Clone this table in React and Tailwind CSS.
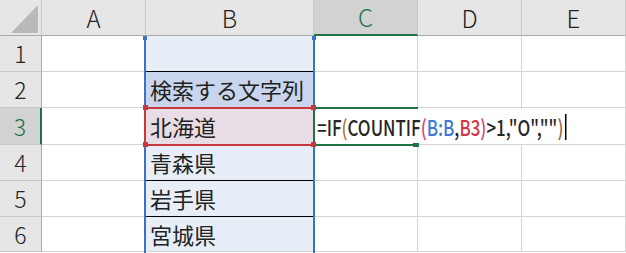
import React from 'react'

const cols = ['A', 'B', 'C', 'D', 'E']
const rowHeights = ['h-[36px]', 'h-[36px]', 'h-[37px]', 'h-[36px]', 'h-[36px]', 'h-[35px]']

const names = ['', '検索する文字列', '北海道', '青森県', '岩手県', '宮城県']

// fill of the B column per row (range highlight)
const bFill = [
    'bg-[#e8eef8]',
    'bg-[#c9d5ec]',
    'bg-[#e8dde5]',
    'bg-[#e8eef8]',
    'bg-[#e8eef8]',
    'bg-[#e8eef8]',
]
const bBorder = [
    'border-b-black',
    'border-b-[#d4d4d4]',
    'border-b-[#d4d4d4]',
    'border-b-black',
    'border-b-black',
    'border-b-[#d4d4d4]',
]

const jp = { fontFamily: '"Noto Sans CJK JP", "Noto Sans", sans-serif' }

const ColHeader = ({ label, active }) => (
    <div
        className={`h-[36px] flex items-center justify-center border-r border-r-[#c8c8c8] text-[24px] font-light ${
            active
                ? 'bg-[#d2d2d2] text-[#217346] border-b-2 border-b-[#217346]'
                : 'bg-[#e6e6e6] text-[#222] border-b border-b-[#a9a9a9]'
        }`}
    >
        {label}
    </div>
)

const Formula = () => (
    <span className="inline-flex items-center origin-left scale-x-[0.77] whitespace-nowrap text-[22px] font-medium text-[#262626]">
        =IF<span className="text-[#b07a3c]">(</span>COUNTIF
        <span className="text-[#cc4a7c]">(</span>
        <span className="text-[#3d78d4]">B:B</span>,
        <span className="text-[#d1353f]">B3</span>
        <span className="text-[#cc4a7c]">)</span>
        &gt;1,"O",""
        <span className="text-[#9c6a48]">)</span>
        <span className="ml-[2px] w-[2px] h-[26px] bg-black" />
    </span>
)

export default function App() {
    return (
        <div className="relative w-[626px] h-[253px] bg-white overflow-hidden" style={jp}>
            <div className="grid grid-cols-[42px_104px_168px_104px_104px_104px]">
                {/* corner */}
                <div className="h-[36px] bg-[#e6e6e6] border-r border-r-[#c8c8c8] border-b border-b-[#a9a9a9] relative">
                    <svg className="absolute left-0 top-0" width="41" height="35" viewBox="0 0 41 35">
                        <polygon points="11,33 38,33 38,5" fill="#b9b9b9" />
                    </svg>
                </div>
                {cols.map((c) => (
                    <ColHeader key={c} label={c} active={c === 'C'} />
                ))}

                {rowHeights.map((h, i) => {
                    const r = i + 1
                    const active = r === 3
                    return (
                        <React.Fragment key={r}>
                            <div
                                className={`${h} flex items-center justify-center border-b border-b-[#c8c8c8] text-[23px] font-light ${
                                    active
                                        ? 'bg-[#d2d2d2] text-[#217346] border-r-2 border-r-[#217346]'
                                        : 'bg-[#e6e6e6] text-[#222] border-r border-r-[#a9a9a9]'
                                }`}
                            >
                                {r}
                            </div>
                            <div className={`${h} border-r border-b border-[#d4d4d4]`} />
                            <div
                                className={`${h} ${bFill[i]} border-r border-r-[#d4d4d4] border-b ${bBorder[i]} flex items-center pl-[4px] text-[22px] text-[#222]`}
                            >
                                {names[i]}
                            </div>
                            <div className={`${h} border-r border-b border-[#d4d4d4]`} />
                            <div className={`${h} border-r border-b border-[#d4d4d4]`} />
                            <div className={`${h} border-r border-b border-[#d4d4d4]`} />
                        </React.Fragment>
                    )
                })}
            </div>

            {/* B:B reference outline */}
            <div className="absolute left-[144px] top-[36px] w-[171px] h-[217px] border-x-2 border-[#3a72c8]" />
            <div className="absolute left-[143px] top-[36px] w-[4px] h-[4px] bg-[#3a72c8]" />
            <div className="absolute left-[312px] top-[36px] w-[4px] h-[4px] bg-[#3a72c8]" />

            {/* B3 reference outline */}
            <div className="absolute left-[144px] top-[107px] w-[171px] h-[39px] border-2 border-[#c8363e]" />

            {/* cell being edited */}
            <div className="absolute left-[315px] top-[109px] w-[309px] h-[35px] bg-white flex items-center pl-[2px]">
                <Formula />
            </div>
            <div className="absolute left-[313px] top-[107px] w-[105px] h-[39px] border-y-2 border-l-2 border-[#217346]" />
            <div className="absolute left-[413px] top-[143px] w-[6px] h-[4px] bg-[#217346]" />

            {/* B3 corner handles */}
            <div className="absolute left-[143px] top-[105px] w-[5px] h-[5px] bg-[#c8363e]" />
            <div className="absolute left-[311px] top-[105px] w-[5px] h-[5px] bg-[#c8363e]" />
            <div className="absolute left-[143px] top-[142px] w-[5px] h-[5px] bg-[#c8363e]" />
            <div className="absolute left-[311px] top-[142px] w-[5px] h-[5px] bg-[#c8363e]" />
        </div>
    )
}
